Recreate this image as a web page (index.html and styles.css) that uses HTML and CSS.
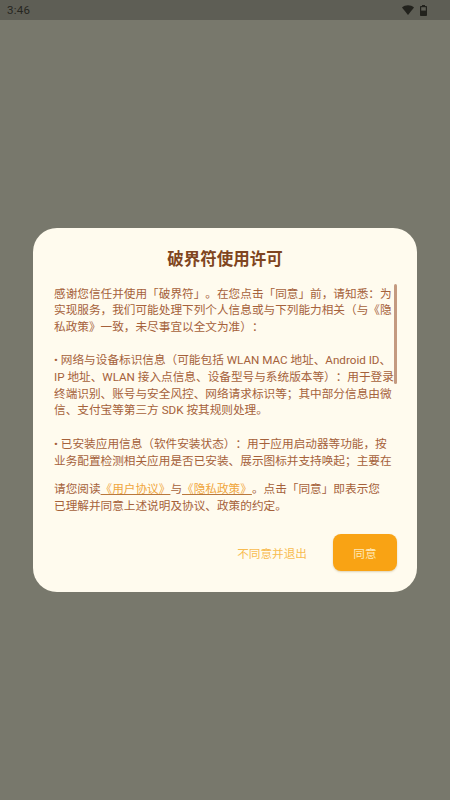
FILE: index.html
```html
<!DOCTYPE html>
<html lang="zh-CN">
<head>
<meta charset="utf-8">
<title>破界符使用许可</title>
<link rel="stylesheet" href="styles.css">
</head>
<body>
<div class="status">
  <span class="time">3:46</span>
  <span class="status-icons">
    <svg class="wifi" viewBox="0 0 12 10" width="12" height="10"><path d="M0 2.6C3.2-.6 8.8-.6 12 2.6L6 10z"/></svg>
    <svg class="battery" viewBox="0 0 7 11" width="7" height="11"><path d="M2 0h3v1h1.2c.4 0 .8.4.8.8V10.2c0 .4-.4.8-.8.8H.8c-.4 0-.8-.4-.8-.8V1.800C0 1.400.4 1 .8 1H2z"/><rect x="1.200" y="2.200" width="4.600" height="3.400" fill="#5e5e55"/></svg>
  </span>
</div>
<main class="scrim">
  <section class="dialog">
    <h1 class="title">破界符使用许可</h1>
    <div class="scroll">
      <div class="thumb"></div>
      <div class="scroll-text">
        <p>感谢您信任并使用「破界符」。在您点击「同意」前，请知悉：为<br>实现服务，我们可能处理下列个人信息或与下列能力相关（与《隐<br>私政策》一致，未尽事宜以全文为准）：</p>
        <p>• 网络与设备标识信息（可能包括 WLAN MAC 地址、Android ID、<br>IP 地址、WLAN 接入点信息、设备型号与系统版本等）：用于登录<br>终端识别、账号与安全风控、网络请求标识等；其中部分信息由微<br>信、支付宝等第三方 SDK 按其规则处理。</p>
        <p>• 已安装应用信息（软件安装状态）：用于应用启动器等功能，按<br>业务配置检测相关应用是否已安装、展示图标并支持唤起；主要在</p>
      </div>
    </div>
    <p class="notice">请您阅读<a class="link">《用户协议》</a>与<a class="link">《隐私政策》</a>。点击「同意」即表示您<br>已理解并同意上述说明及协议、政策的约定。</p>
    <div class="actions">
      <span class="decline">不同意并退出</span>
      <span class="agree">同意</span>
    </div>
  </section>
</main>
</body>
</html>
```
FILE: styles.css
```css
* { box-sizing: border-box; }
html, body { margin: 0; height: 800px; overflow: hidden; }
body {
  display: flex;
  flex-direction: column;
  background: #78786c;
  font-family: Roboto, "Noto Sans CJK SC", sans-serif;
  text-spacing-trim: space-all;
}
.status {
  height: 20px;
  flex: none;
  background: #5e5e55;
  display: flex;
  justify-content: space-between;
  align-items: center;
  padding: 0 23px 0 7px;
  color: #26261f;
}
.time { font-size: 11.500px; letter-spacing: 0.3px; }
.status-icons { display: flex; align-items: center; gap: 6px; }
.status-icons svg { fill: #22221d; display: block; }
.scrim {
  flex: 1;
  display: flex;
  justify-content: center;
  padding-top: 208px;
}
.dialog {
  width: 384px;
  height: 364px;
  background: #fffbee;
  border-radius: 24px;
  padding: 20px 20px 0 21px;
  display: flex;
  flex-direction: column;
}
.title {
  margin: 0;
  font-size: 16.500px;
  line-height: 24px;
  font-weight: 700;
  text-align: center;
  color: #7f4520;
  padding-right: 1px;
}
.scroll {
  position: relative;
  height: 185px;
  margin-top: 12px;
  overflow: hidden;
}
.thumb {
  position: absolute;
  top: 0;
  right: 0;
  width: 3.500px;
  height: 100px;
  background: #c49a80;
  border-radius: 2px;
}
.scroll-text {
  padding-top: 1.500px;
  font-size: 11.650px;
  line-height: 16.700px;
  color: #a5613a;
  white-space: nowrap;
}
.scroll-text p { margin: 0 0 16.700px; }
.notice {
  margin: 12px 0 0;
  font-size: 11.650px;
  line-height: 17px;
  color: #a5613a;
  white-space: nowrap;
}
.link {
  color: #f0a63c;
  text-decoration: underline;
  text-decoration-color: #b9783c;
}
.actions {
  margin-top: 19px;
  display: flex;
  justify-content: flex-end;
  align-items: center;
  gap: 26px;
}
.decline {
  font-size: 11.650px;
  color: #f8bb50;
}
.agree {
  width: 64px;
  height: 37px;
  border-radius: 8px;
  background: #f9a314;
  color: #ffe9b8;
  font-size: 11.650px;
  display: flex;
  align-items: center;
  justify-content: center;
  box-shadow: 0 1px 2px rgba(120, 90, 20, 0.25);
}
```
